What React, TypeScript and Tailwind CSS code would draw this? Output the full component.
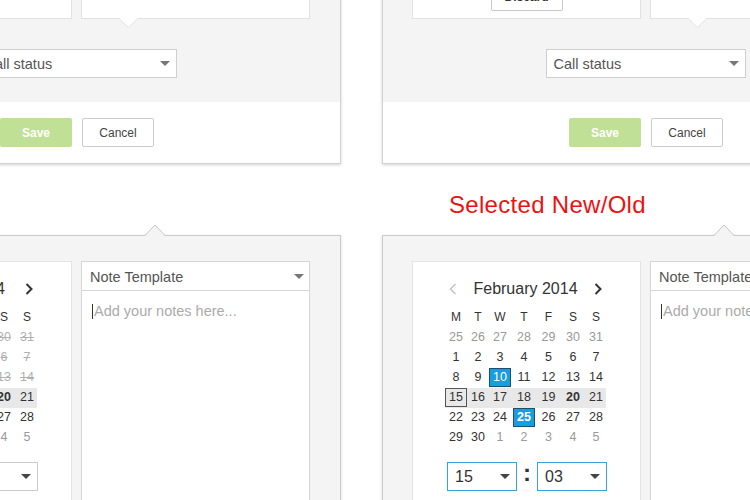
import React from 'react';

type Variant = 'past' | 'selected';

const WEEKDAYS = ['M', 'T', 'W', 'T', 'F', 'S', 'S'];

const ROWS: { d: number; other?: boolean }[][] = [
  [25, 26, 27, 28, 29, 30, 31].map((d) => ({ d, other: true })),
  [1, 2, 3, 4, 5, 6, 7].map((d) => ({ d })),
  [8, 9, 10, 11, 12, 13, 14].map((d) => ({ d })),
  [15, 16, 17, 18, 19, 20, 21].map((d) => ({ d })),
  [22, 23, 24, 25, 26, 27, 28].map((d) => ({ d })),
  [
    { d: 29 },
    { d: 30 },
    { d: 1, other: true },
    { d: 2, other: true },
    { d: 3, other: true },
    { d: 4, other: true },
    { d: 5, other: true },
  ],
];

function Caret({ color = '#666' }: { color?: string }) {
  return (
    <svg width="10" height="5" viewBox="0 0 10 5">
      <path d="M0 0h10L5 5z" fill={color} />
    </svg>
  );
}

function Chevron({ dir, light }: { dir: 'left' | 'right'; light?: boolean }) {
  return (
    <svg width="8" height="12" viewBox="0 0 8 12">
      <path
        d={dir === 'left' ? 'M6.5 1L1.5 6l5 5' : 'M1.5 1l5 5-5 5'}
        fill="none"
        stroke={light ? '#c4c4c4' : '#333'}
        strokeWidth={light ? 1.5 : 2}
      />
    </svg>
  );
}

function DayCell({ row, col, d, other, variant }: { row: number; col: number; d: number; other?: boolean; variant: Variant }) {
  const struck = variant === 'past' && row < 3;
  const blue = variant === 'selected' && ((row === 2 && col === 2) || (row === 4 && col === 3));
  const outlined = variant === 'selected' && row === 3 && col === 0;
  const bold = (row === 3 && col === 5) || (variant === 'selected' && row === 4 && col === 3);

  let cls = 'inline-flex w-[22px] h-[19px] items-center justify-center';
  if (blue) cls += ' bg-[#169fdf] border border-[#1d4f6e] text-white';
  else if (outlined) cls += ' border border-[#555] text-[#333]';
  else if (struck) cls += ' text-[#b0b0b0] line-through';
  else if (other) cls += ' text-[#9a9a9a]';
  else cls += ' text-[#333]';
  if (bold) cls += ' font-bold';

  return (
    <div className="h-[20px] flex items-start justify-center">
      <span className={cls}>{d}</span>
    </div>
  );
}

function Calendar({ variant }: { variant: Variant }) {
  const focused = variant === 'selected';
  const selectCls = `w-[70px] h-[29px] bg-white border flex items-center justify-between pl-[7px] pr-[6px] text-[16px] text-[#333] ${
    focused ? 'border-[#3aa2d8]' : 'border-[#cccccc]'
  }`;
  return (
    <div className="w-[229px] h-[265px] bg-white border border-[#e4e4e4] pt-[16px] pl-[32px]">
      <div className="w-[161px] h-[22px] px-[4px] flex items-center justify-between">
        <Chevron dir="left" light />
        <span className="text-[16px] text-[#333]">{variant === 'past' ? 'January 2014' : 'February 2014'}</span>
        <Chevron dir="right" />
      </div>
      <div className="mt-[5px] w-[161px] h-[23px] grid grid-cols-[22px_22px_22px_26px_23px_26px_20px] items-center text-[12px] text-[#333]">
        {WEEKDAYS.map((w, i) => (
          <span key={i} className="text-center">{w}</span>
        ))}
      </div>
      <div className="w-[161px] text-[12.5px]">
        {ROWS.map((r, ri) => (
          <div
            key={ri}
            className={`grid grid-cols-[22px_22px_22px_26px_23px_26px_20px] ${ri === 3 ? 'bg-[#e8e8e8]' : ''}`}
          >
            {r.map((c, ci) => (
              <DayCell key={ci} row={ri} col={ci} d={c.d} other={c.other} variant={variant} />
            ))}
          </div>
        ))}
      </div>
      <div className="mt-[13px] ml-[2px] flex items-center">
        <div className={selectCls}>
          <span className="pt-[1px]">15</span>
          <Caret color="#444" />
        </div>
        <span className="w-[20px] text-center text-[24px] font-bold text-[#333] leading-none pb-[6px]">:</span>
        <div className={selectCls}>
          <span className="pt-[1px]">03</span>
          <Caret color="#444" />
        </div>
      </div>
    </div>
  );
}

function Notes() {
  return (
    <div className="w-[229px] h-[265px] bg-white border border-[#d6d6d6]">
      <div className="h-[29px] border-b border-[#d6d6d6] flex items-center justify-between pl-[8px] pr-[5px]">
        <span className="text-[14.5px] text-[#555] pt-[3px]">Note Template</span>
        <Caret color="#777" />
      </div>
      <div className="pt-[10px] pl-[10px] flex items-center h-[30px]">
        <span className="w-[1px] h-[15px] bg-[#333] mr-[1px]" />
        <span className="text-[14.5px] text-[#ababab] leading-[20px]">Add your notes here...</span>
      </div>
    </div>
  );
}

function TopPanel() {
  return (
    <div className="w-[528px] -mt-[100px] bg-white border-x border-b border-[#d2d2d2] shadow-[0_1px_3px_rgba(0,0,0,0.18)]">
      <div className="bg-[#f4f4f4] pl-[29px] pr-[30px] pb-[24px]">
        <div className="flex gap-[9px] h-[119px]">
          <div className="w-[229px] bg-white border border-[#e2e2e2] flex items-end justify-center pb-[7px]">
            <button className="w-[72px] h-[29px] bg-white border border-[#c9c9c9] rounded-[2px] text-[12px] font-bold text-[#333]">
              Discard
            </button>
          </div>
          <div className="relative w-[229px] bg-white border border-[#e2e2e2]">
            <svg className="absolute top-full left-[37px]" width="19" height="10" viewBox="0 0 19 10">
              <path d="M0 0h19L9.5 9.5z" fill="#ffffff" />
              <path d="M0 0.5L9.5 9.5L19 0.5" fill="none" stroke="#e2e2e2" />
            </svg>
          </div>
        </div>
        <div className="mt-[30px] mx-auto w-[200px] h-[29px] bg-white border border-[#cfcfcf] flex items-center justify-between pl-[7px] pr-[6px]">
          <span className="text-[14.5px] text-[#555] pt-[3px]">Call status</span>
          <Caret color="#777" />
        </div>
      </div>
      <div className="h-[61px] flex items-center justify-center gap-[10px]">
        <button className="w-[72px] h-[29px] rounded-[2px] bg-[#bfe095] text-white text-[12px] font-bold pt-[1px]">Save</button>
        <button className="w-[72px] h-[29px] rounded-[2px] bg-white border border-[#cccccc] text-[#444] text-[12px] pt-[1px]">
          Cancel
        </button>
      </div>
    </div>
  );
}

function BottomPanel({ variant }: { variant: Variant }) {
  return (
    <div className="relative mt-[16px] w-[528px] h-[300px] bg-[#f4f4f4] border-t border-x border-[#cbcbcb] shadow-[0_1px_3px_rgba(0,0,0,0.15)] pl-[29px] pt-[25px]">
      <svg className="absolute -top-[12px] left-[331px]" width="20" height="12" viewBox="0 0 20 12">
        <path d="M0 12L10 1.5L20 12z" fill="#f4f4f4" />
        <path d="M0 11.5L10 1L20 11.5" fill="none" stroke="#c4c4c4" />
      </svg>
      <div className="flex gap-[9px]">
        <Calendar variant={variant} />
        <Notes />
      </div>
    </div>
  );
}

function Column({ label, variant }: { label?: string; variant: Variant }) {
  return (
    <div className="flex flex-col w-[528px] shrink-0">
      <TopPanel />
      <div className="mt-[27px] h-[28px] pl-[67px] text-[24px] leading-[28px] tracking-[0.3px] text-[#ee1111]">
        {label}
      </div>
      <BottomPanel variant={variant} />
    </div>
  );
}

export default function App() {
  return (
    <div className="w-[750px] h-[500px] overflow-hidden bg-white font-['Liberation_Sans',Arial,sans-serif]">
      <div className="flex gap-[41px] -ml-[187px]">
        <Column variant="past" />
        <Column label="Selected New/Old" variant="selected" />
      </div>
    </div>
  );
}
